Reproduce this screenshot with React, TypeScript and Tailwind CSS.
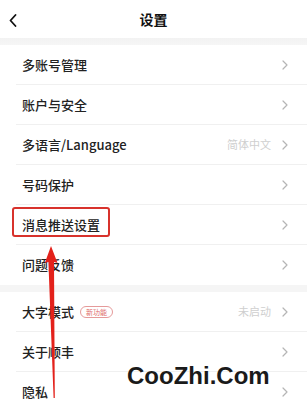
import React from 'react';

interface RowProps {
  label: string;
  value?: string;
  badge?: string;
  last?: boolean;
}

const Chevron: React.FC = () => (
  <svg width="6" height="10" viewBox="0 0 6 10" className="shrink-0">
    <polyline points="1,1 5,5 1,9" fill="none" stroke="#b5b5b5" strokeWidth="1.2" strokeLinecap="round" strokeLinejoin="round" />
  </svg>
);

const Row: React.FC<RowProps> = ({ label, value, badge, last }) => (
  <div className="pl-4">
    <div className={`flex h-10 items-center pr-[19px] pl-[6px] ${last ? '' : 'border-b border-[#f0f0f0]'}`}>
      <span className="text-[13px] font-medium text-[#222]">{label}</span>
      {badge && (
        <span className="ml-[6px] rounded-full border border-[#e59a9a] px-[5px] text-[7px] leading-[10px] text-[#e06b6b]">
          {badge}
        </span>
      )}
      <div className="flex-1" />
      {value && <span className="mr-[11px] text-[11px] text-[#cfcfcf]">{value}</span>}
      <Chevron />
    </div>
  </div>
);

const App: React.FC = () => {
  return (
    <div
      className="relative h-[409px] w-[307px] overflow-hidden bg-white"
      style={{ fontFamily: '"Noto Sans CJK SC", "Noto Sans", sans-serif' }}
    >
      {/* header */}
      <div className="relative flex h-[38px] items-center justify-center">
        <svg width="8" height="13" viewBox="0 0 8 13" className="absolute left-[9px] top-[14px]">
          <polyline points="6.5,1 1.5,6.5 6.5,12" fill="none" stroke="#111" strokeWidth="1.8" strokeLinecap="round" strokeLinejoin="round" />
        </svg>
        <span className="text-[14px] font-bold text-[#111]">设置</span>
      </div>
      <div className="h-[7px] bg-gradient-to-b from-[#f2f2f2] to-[#f6f6f6]" />

      <div>
        <Row label="多账号管理" />
        <Row label="账户与安全" />
        <Row label="多语言/Language" value="简体中文" />
        <Row label="号码保护" />
        <Row label="消息推送设置" />
        <Row label="问题反馈" last />
      </div>
      <div className="h-[7px] bg-[#f5f5f5]" />
      <div>
        <Row label="大字模式" badge="新功能" value="未启动" />
        <Row label="关于顺丰" />
        <Row label="隐私" last />
      </div>

      {/* annotation: highlight box */}
      <div className="absolute left-[12px] top-[207px] h-[30px] w-[98px] rounded-[3px] border-2 border-[#d8322c]" />

      {/* annotation: arrow */}
      <svg width="307" height="409" viewBox="0 0 307 409" className="pointer-events-none absolute left-0 top-0">
        <polygon
          points="51,246 57.5,263 54,262 54.8,398 53.6,398 48.4,262 44.8,263"
          fill="#e3211b"
        />
      </svg>

      {/* watermark */}
      <div
        className="absolute left-[127px] top-[364px] text-[24px] font-bold leading-none text-[#1a1a1a]"
        style={{ fontFamily: '"Liberation Sans", Arial, sans-serif' }}
      >
        CooZhi.Com
      </div>
    </div>
  );
};

export default App;
